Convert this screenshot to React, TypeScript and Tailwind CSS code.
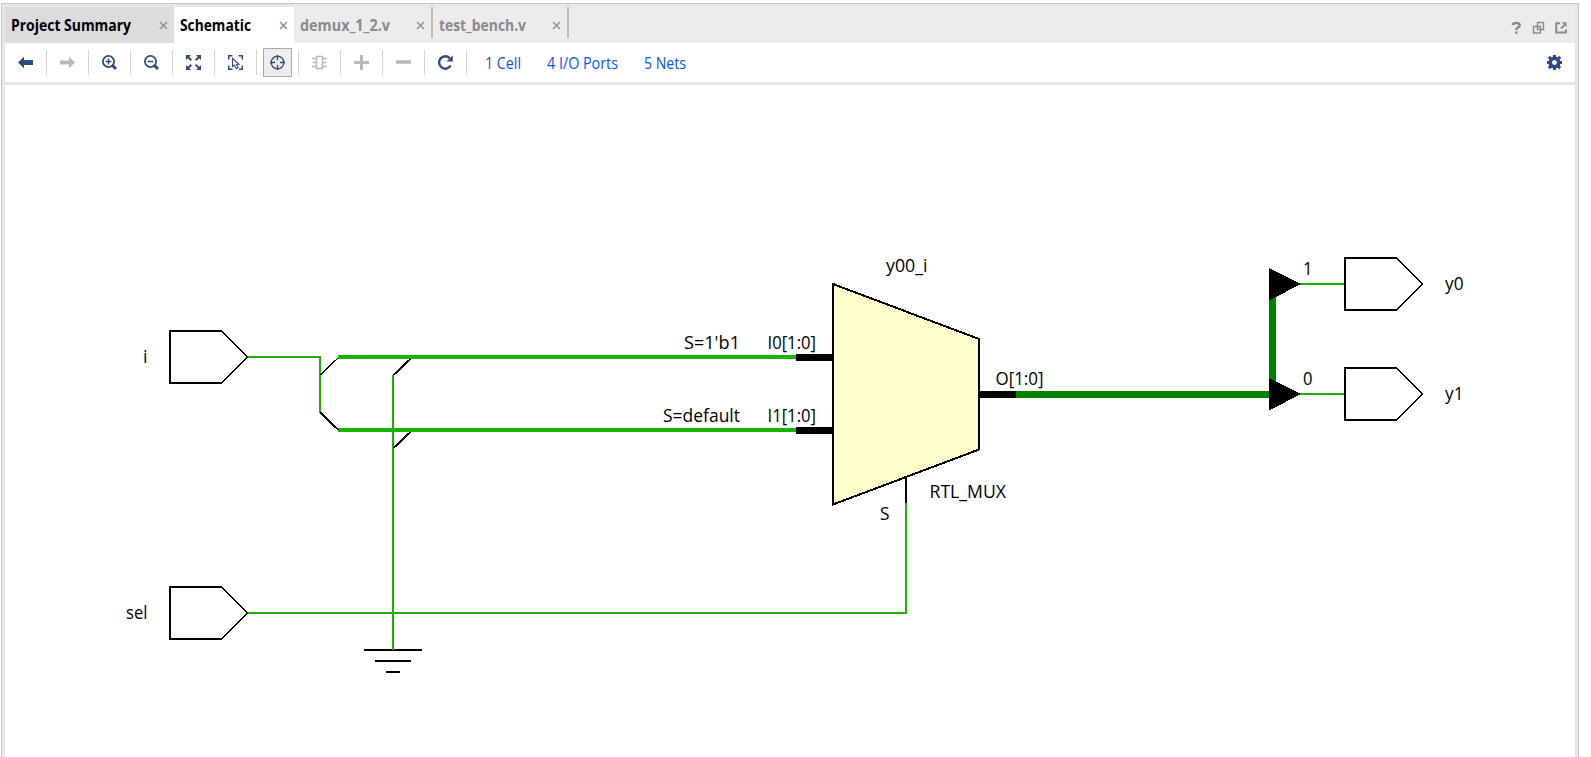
import type { ReactNode } from "react";

const NAVY = "#2f4a80";
const GREY = "#b9b9b9";
const NET = "#1ab400";
const BUS = "#008200";

function Close() {
  return (
    <svg width="9" height="9" viewBox="0 0 9 9" className="shrink-0">
      <path d="M1 1L8 8M8 1L1 8" stroke="#8c8c8c" strokeWidth="1.4" fill="none" />
    </svg>
  );
}

function Tab({ label, className, text, length }: { label: string; className: string; text: string; length: number }) {
  return (
    <div className={`flex h-full shrink-0 items-center justify-between ${className}`}>
      <svg width={length} height="36" className="block shrink-0 overflow-visible">
        <text x="0" y="24" textLength={length} lengthAdjust="spacingAndGlyphs" className={`text-[15.5px] font-bold ${text}`}>
          {label}
        </text>
      </svg>
      <Close />
    </div>
  );
}

function Tool({ children, active }: { children: ReactNode; active?: boolean }) {
  return (
    <div className="flex h-full w-[42px] shrink-0 items-center">
      <div className="flex w-[41px] justify-center">
        <div
          className={
            active
              ? "flex h-[29px] w-[29px] items-center justify-center border border-[#a9a9a9] bg-[#ededed]"
              : "flex h-[29px] w-[29px] items-center justify-center"
          }
        >
          <svg width="17" height="17" viewBox="0 0 17 17" fill="none" className="shrink-0">
            {children}
          </svg>
        </div>
      </div>
      <div className="h-[25px] w-px bg-[#d4d4d4]" />
    </div>
  );
}

function Link({ label, length, className }: { label: string; length: number; className: string }) {
  return (
    <svg width={length} height="39" className={`block shrink-0 overflow-visible ${className}`}>
      <text x="0" y="26" textLength={length} lengthAdjust="spacingAndGlyphs" className="fill-[#0055ff] text-[15.5px]">
        {label}
      </text>
    </svg>
  );
}

function Port({ x, y }: { x: number; y: number }) {
  return (
    <g transform={`translate(${x} ${y})`} stroke="#000" fill="none">
      <path d="M51 26H0V-26H51" strokeWidth="2" strokeLinecap="square" />
      <path d="M51.5 -26L77.5 0" strokeWidth="2" />
      <path d="M51.5 26L77.5 0" strokeWidth="1.3" />
    </g>
  );
}

const labels: { t: string; x: number; y: number; w: number }[] = [
  { t: "i", x: 143, y: 363, w: 4.5 },
  { t: "sel", x: 126, y: 619, w: 21.5 },
  { t: "y00_i", x: 886, y: 272, w: 41.5 },
  { t: "S=1'b1", x: 684, y: 349, w: 56 },
  { t: "I0[1:0]", x: 767.5, y: 349, w: 48.5 },
  { t: "S=default", x: 663, y: 422, w: 77 },
  { t: "I1[1:0]", x: 767.5, y: 422, w: 48.5 },
  { t: "O[1:0]", x: 995.5, y: 385, w: 48 },
  { t: "RTL_MUX", x: 929.5, y: 498, w: 76.5 },
  { t: "S", x: 880, y: 520, w: 9.5 },
  { t: "1", x: 1303, y: 275, w: 9.5 },
  { t: "0", x: 1303, y: 385, w: 9.5 },
  { t: "y0", x: 1445, y: 290, w: 18.5 },
  { t: "y1", x: 1445, y: 400, w: 18.5 },
];

function Schematic() {
  return (
    <svg width="1570" height="672" viewBox="5 85 1570 672" className="block">
      <g shapeRendering="crispEdges" fill="none">
        <g stroke={NET} strokeWidth="2">
          <path d="M247 357H320V413" />
          <path d="M247 613H906V503" />
          <path d="M1299 284H1344M1299 394H1344" />
        </g>
        <path d="M338 357H796M338 430H796" stroke={NET} strokeWidth="4" />
        <path d="M364 650H422M375 661H411M386 672H400" stroke="#000" strokeWidth="2" />
        <path d="M393 375V650" stroke={NET} strokeWidth="2" />
        <path d="M320.5 375L338.5 357.5" stroke="#000" strokeWidth="1.3" />
        <path d="M320.5 412.5L338.5 430M393.5 375L410.5 359M393.5 448L410.5 432" stroke="#000" strokeWidth="2" />
        <path d="M1016 394.5H1270M1272.5 383V296" stroke={BUS} strokeWidth="7" />
        <path d="M796 357.5H833M796 430.5H833M979 394.5H1016" stroke="#000" strokeWidth="7" />
        <path d="M833 284L979 339V449.500L833 504.500Z" fill="#ffffcc" stroke="#000" strokeWidth="2" />
        <path d="M906 476V503" stroke="#000" strokeWidth="2" />
        <path d="M1269 268L1301 284L1269 300.500ZM1269 378L1301 394L1269 410.500Z" fill="#000" />
        <Port x={170} y={357} />
        <Port x={170} y={613} />
        <Port x={1345} y={284} />
        <Port x={1345} y={394} />
      </g>
      <g className="fill-black text-[17.5px]">
        {labels.map((l) => (
          <text key={l.t} x={l.x} y={l.y} textLength={l.w} lengthAdjust="spacingAndGlyphs">
            {l.t}
          </text>
        ))}
      </g>
    </svg>
  );
}

export default function App() {
  return (
    <div className="h-[757px] w-full overflow-hidden bg-white pt-[3px] pl-px font-['Open_Sans','Noto_Sans',sans-serif]">
      <div className="flex h-[760px] w-[1578px] flex-col border border-[#c6c6c6] bg-[#e6e6e6] px-[3px] pt-[3px]">
        <div className="flex h-[36px] shrink-0 items-center bg-[#ececec]">
          <Tab label="Project Summary" length={120} className="w-[169px] bg-[#dcdcdc] pr-[6px] pl-[6px]" text="fill-black" />
          <Tab label="Schematic" length={71} className="w-[120px] bg-white pr-[6px] pl-[6px]" text="fill-black" />
          <Tab label="demux_1_2.v" length={90} className="w-[137px] pr-[6px] pl-[6px]" text="fill-[#8a8a8a]" />
          <div className="mb-[5px] h-[31px] w-[2px] bg-[#bebebe]" />
          <Tab label="test_bench.v" length={87} className="w-[134px] pr-[6px] pl-[6px]" text="fill-[#8a8a8a]" />
          <div className="mb-[5px] h-[31px] w-[2px] bg-[#bebebe]" />
          <svg width="58" height="16" viewBox="0 0 58 16" fill="none" className="mt-[5px] mr-[7px] ml-auto" stroke="#8a8a8a">
            <path d="M2.500 5Q3 3 6.300 3Q9.700 3 9.700 5.200Q9.700 6.700 7.800 7.600Q6.300 8.400 6.300 10" strokeWidth="2.400" />
            <path d="M5 12.600H7.600" strokeWidth="2.200" />
            <path d="M27.500 2.500H33.500V9.500H27.500ZM23.500 6.500H30.500V13H23.500Z" strokeWidth="1.400" />
            <path d="M50 3.300H46.200V12.500H56V9.500" strokeWidth="2" />
            <path d="M51 8.500L54.500 5" strokeWidth="1.800" />
            <path d="M51.500 2.300H56.500V7.300Z" fill="#8a8a8a" stroke="none" />
          </svg>
        </div>
        <div className="flex h-[39px] shrink-0 items-center bg-white">
          <Tool>
            <path d="M1 8.500L7 2.800V6H16V11H7V14.200Z" fill={NAVY} />
          </Tool>
          <Tool>
            <path d="M16 8.500L10 2.800V6.500H1V10.500H10V14.200Z" fill={GREY} />
          </Tool>
          <Tool>
            <circle cx="7.500" cy="7.500" r="5.600" stroke={NAVY} strokeWidth="1.800" />
            <path d="M7.500 4.500V10.500M4.500 7.500H10.500" stroke={NAVY} strokeWidth="1.500" />
            <path d="M11.500 11.500L15 15" stroke={NAVY} strokeWidth="3" />
          </Tool>
          <Tool>
            <circle cx="7.500" cy="7.500" r="5.600" stroke={NAVY} strokeWidth="1.800" />
            <path d="M4.500 7.500H10.500" stroke={NAVY} strokeWidth="1.500" />
            <path d="M11.500 11.500L15 15" stroke={NAVY} strokeWidth="3" />
          </Tool>
          <Tool>
            <path d="M1 1H6L1 6ZM16 1V6L11 1ZM1 16V11L6 16ZM16 16H11L16 11Z" fill={NAVY} />
            <path d="M2 2L6.300 6.300M15 2L10.700 6.300M2 15L6.300 10.700M15 15L10.700 10.700" stroke={NAVY} strokeWidth="2" />
          </Tool>
          <Tool>
            <path d="M1.700 5.500V1.700H5.500M11.500 1.700H15.300V5.500M15.300 11.500V15.300H12M5.500 15.300H1.700V11.500" stroke={NAVY} strokeWidth="1.500" />
            <path d="M5.500 4.500V12.500L7.500 11L9.300 14.500L11.200 13.500L9.500 10.200H12Z" stroke={NAVY} strokeWidth="1.100" />
          </Tool>
          <Tool active>
            <circle cx="8.500" cy="8.500" r="6.300" stroke={NAVY} strokeWidth="1.300" />
            <path d="M8.500 1V6M8.500 11V16M1 8.500H6M11 8.500H16" stroke={NAVY} strokeWidth="1.300" />
          </Tool>
          <Tool>
            <path d="M5.500 2.500H11.500V14.500H5.500ZM5.500 4.500H1M5.500 8.500H2M5.500 12.500H1M11.500 4.500H16M11.500 8.500H15M11.500 12.500H16" stroke={GREY} strokeWidth="1.400" />
          </Tool>
          <Tool>
            <path d="M8.500 1V16M1 8.500H16" stroke={GREY} strokeWidth="3" />
          </Tool>
          <Tool>
            <path d="M1 8H16" stroke={GREY} strokeWidth="3.500" />
          </Tool>
          <Tool>
            <path d="M13.700 11.500A6.200 6.200 0 1 1 12.800 4.200" stroke={NAVY} strokeWidth="2.400" />
            <path d="M15.800 1.500V7.500H9.500Z" fill={NAVY} />
          </Tool>
          <Link label="1 Cell" length={36} className="ml-[18px]" />
          <Link label="4 I/O Ports" length={71} className="ml-[26px]" />
          <Link label="5 Nets" length={42} className="ml-[26px]" />
          <svg width="17" height="17" viewBox="-8.500 -8.500 17 17" className="mr-[12px] ml-auto">
            <circle r="4.200" fill="none" stroke={NAVY} strokeWidth="3.600" />
            <path
              d="M0 -7.500V-5M0 7.500V5M-7.500 0H-5M7.500 0H5M-5.600 -5.600L-3.500 -3.500M5.600 5.600L3.500 3.500M-5.600 5.600L-3.500 3.500M5.600 -5.600L3.500 -3.500"
              stroke={NAVY}
              strokeWidth="3"
            />
          </svg>
        </div>
        <div className="mt-[3px] h-[672px] shrink-0 bg-white">
          <Schematic />
        </div>
      </div>
    </div>
  );
}
